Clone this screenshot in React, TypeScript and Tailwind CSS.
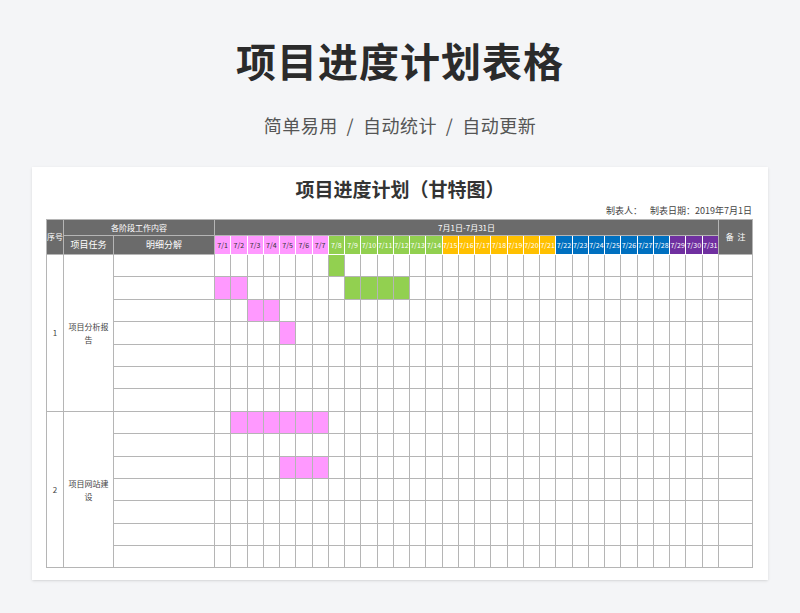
import React from "react";

const days = Array.from({ length: 31 }, (_, i) => i + 1);
const dayColor = (d: number) =>
  d <= 7 ? "bg-[#ff99ff] text-[#333]" : d <= 14 ? "bg-[#92d050] text-white" : d <= 21 ? "bg-[#ffc000] text-white" : d <= 28 ? "bg-[#0070c0] text-white" : "bg-[#7030a0] text-white";

const fills: Record<number, Record<number, string>> = {
  0: { 8: "g" },
  1: { 1: "p", 2: "p", 9: "g", 10: "g", 11: "g", 12: "g" },
  2: { 3: "p", 4: "p" },
  3: { 5: "p" },
  7: { 2: "p", 3: "p", 4: "p", 5: "p", 6: "p", 7: "p" },
  9: { 5: "p", 6: "p", 7: "p" },
};

const bd = "border border-[#b5b5b5]";

export default function App() {
  return (
    <div className="w-[800px] h-[613px] bg-[#f4f5f7] overflow-hidden" style={{ fontFamily: '"Noto Sans CJK SC", "Noto Sans", sans-serif' }}>
      <h1 className="text-center text-[40px] font-bold text-[#2b2b2b] pt-[30px] leading-[60px] tracking-[1px]">项目进度计划表格</h1>
      <div className="text-center text-[18px] text-[#555] mt-[20px] leading-[30px] tracking-wide">简单易用 &nbsp;/&nbsp; 自动统计 &nbsp;/&nbsp; 自动更新</div>
      <div className="mx-[32px] mt-[27px] bg-white h-[413px] px-[14px] pt-[8px] shadow-sm overflow-hidden">
        <div className="text-center text-[19px] font-bold text-[#333] leading-[28px]">项目进度计划（甘特图）</div>
        <div className="text-right text-[9px] text-[#444] leading-[14px] mt-[1px] pr-[2px]">制表人：&nbsp;&nbsp;&nbsp; 制表日期：2019年7月1日</div>
        <table className="table-fixed border-collapse w-[706px] text-[8px] mt-[1px]">
          <colgroup>
            <col className="w-[17px]" />
            <col className="w-[50px]" />
            <col className="w-[101px]" />
            {days.map((d) => (
              <col key={d} className="w-[16.26px]" />
            ))}
            <col className="w-[34px]" />
          </colgroup>
          <thead>
            <tr className="h-[16px] bg-[#6b6b6b] text-white">
              <th rowSpan={2} className={`${bd} font-normal text-[8px] p-0 whitespace-nowrap overflow-hidden`}>序号</th>
              <th colSpan={2} className={`${bd} font-normal p-0`}>各阶段工作内容</th>
              <th colSpan={31} className={`${bd} font-normal p-0`}>7月1日-7月31日</th>
              <th rowSpan={2} className={`${bd} font-normal p-0 whitespace-nowrap`}>备&nbsp;&nbsp;注</th>
            </tr>
            <tr className="h-[19px] text-white">
              <th className={`${bd} bg-[#6b6b6b] font-normal p-0 text-[9px]`}>项目任务</th>
              <th className={`${bd} bg-[#6b6b6b] font-normal p-0 text-[9px]`}>明细分解</th>
              {days.map((d) => (
                <th key={d} className={`${bd} border-white ${dayColor(d)} font-normal p-0 text-[7px] whitespace-nowrap overflow-hidden`}>7/{d}</th>
              ))}
            </tr>
          </thead>
          <tbody>
            {Array.from({ length: 14 }, (_, r) => (
              <tr key={r} className="h-[22.4px]">
                {r % 7 === 0 && (
                  <>
                    <td rowSpan={7} className={`${bd} text-center text-[#444] text-[8px]`}>{r === 0 ? 1 : 2}</td>
                    <td rowSpan={7} className={`${bd} text-center text-[#444] px-[4px] leading-[13px]`}>{r === 0 ? "项目分析报告" : "项目网站建设"}</td>
                  </>
                )}
                <td className={bd}></td>
                {days.map((d) => {
                  const f = fills[r]?.[d];
                  return <td key={d} className={`${bd} ${f === "p" ? "bg-[#ff99ff]" : f === "g" ? "bg-[#92d050]" : ""}`}></td>;
                })}
                <td className={bd}></td>
              </tr>
            ))}
          </tbody>
        </table>
      </div>
    </div>
  );
}
